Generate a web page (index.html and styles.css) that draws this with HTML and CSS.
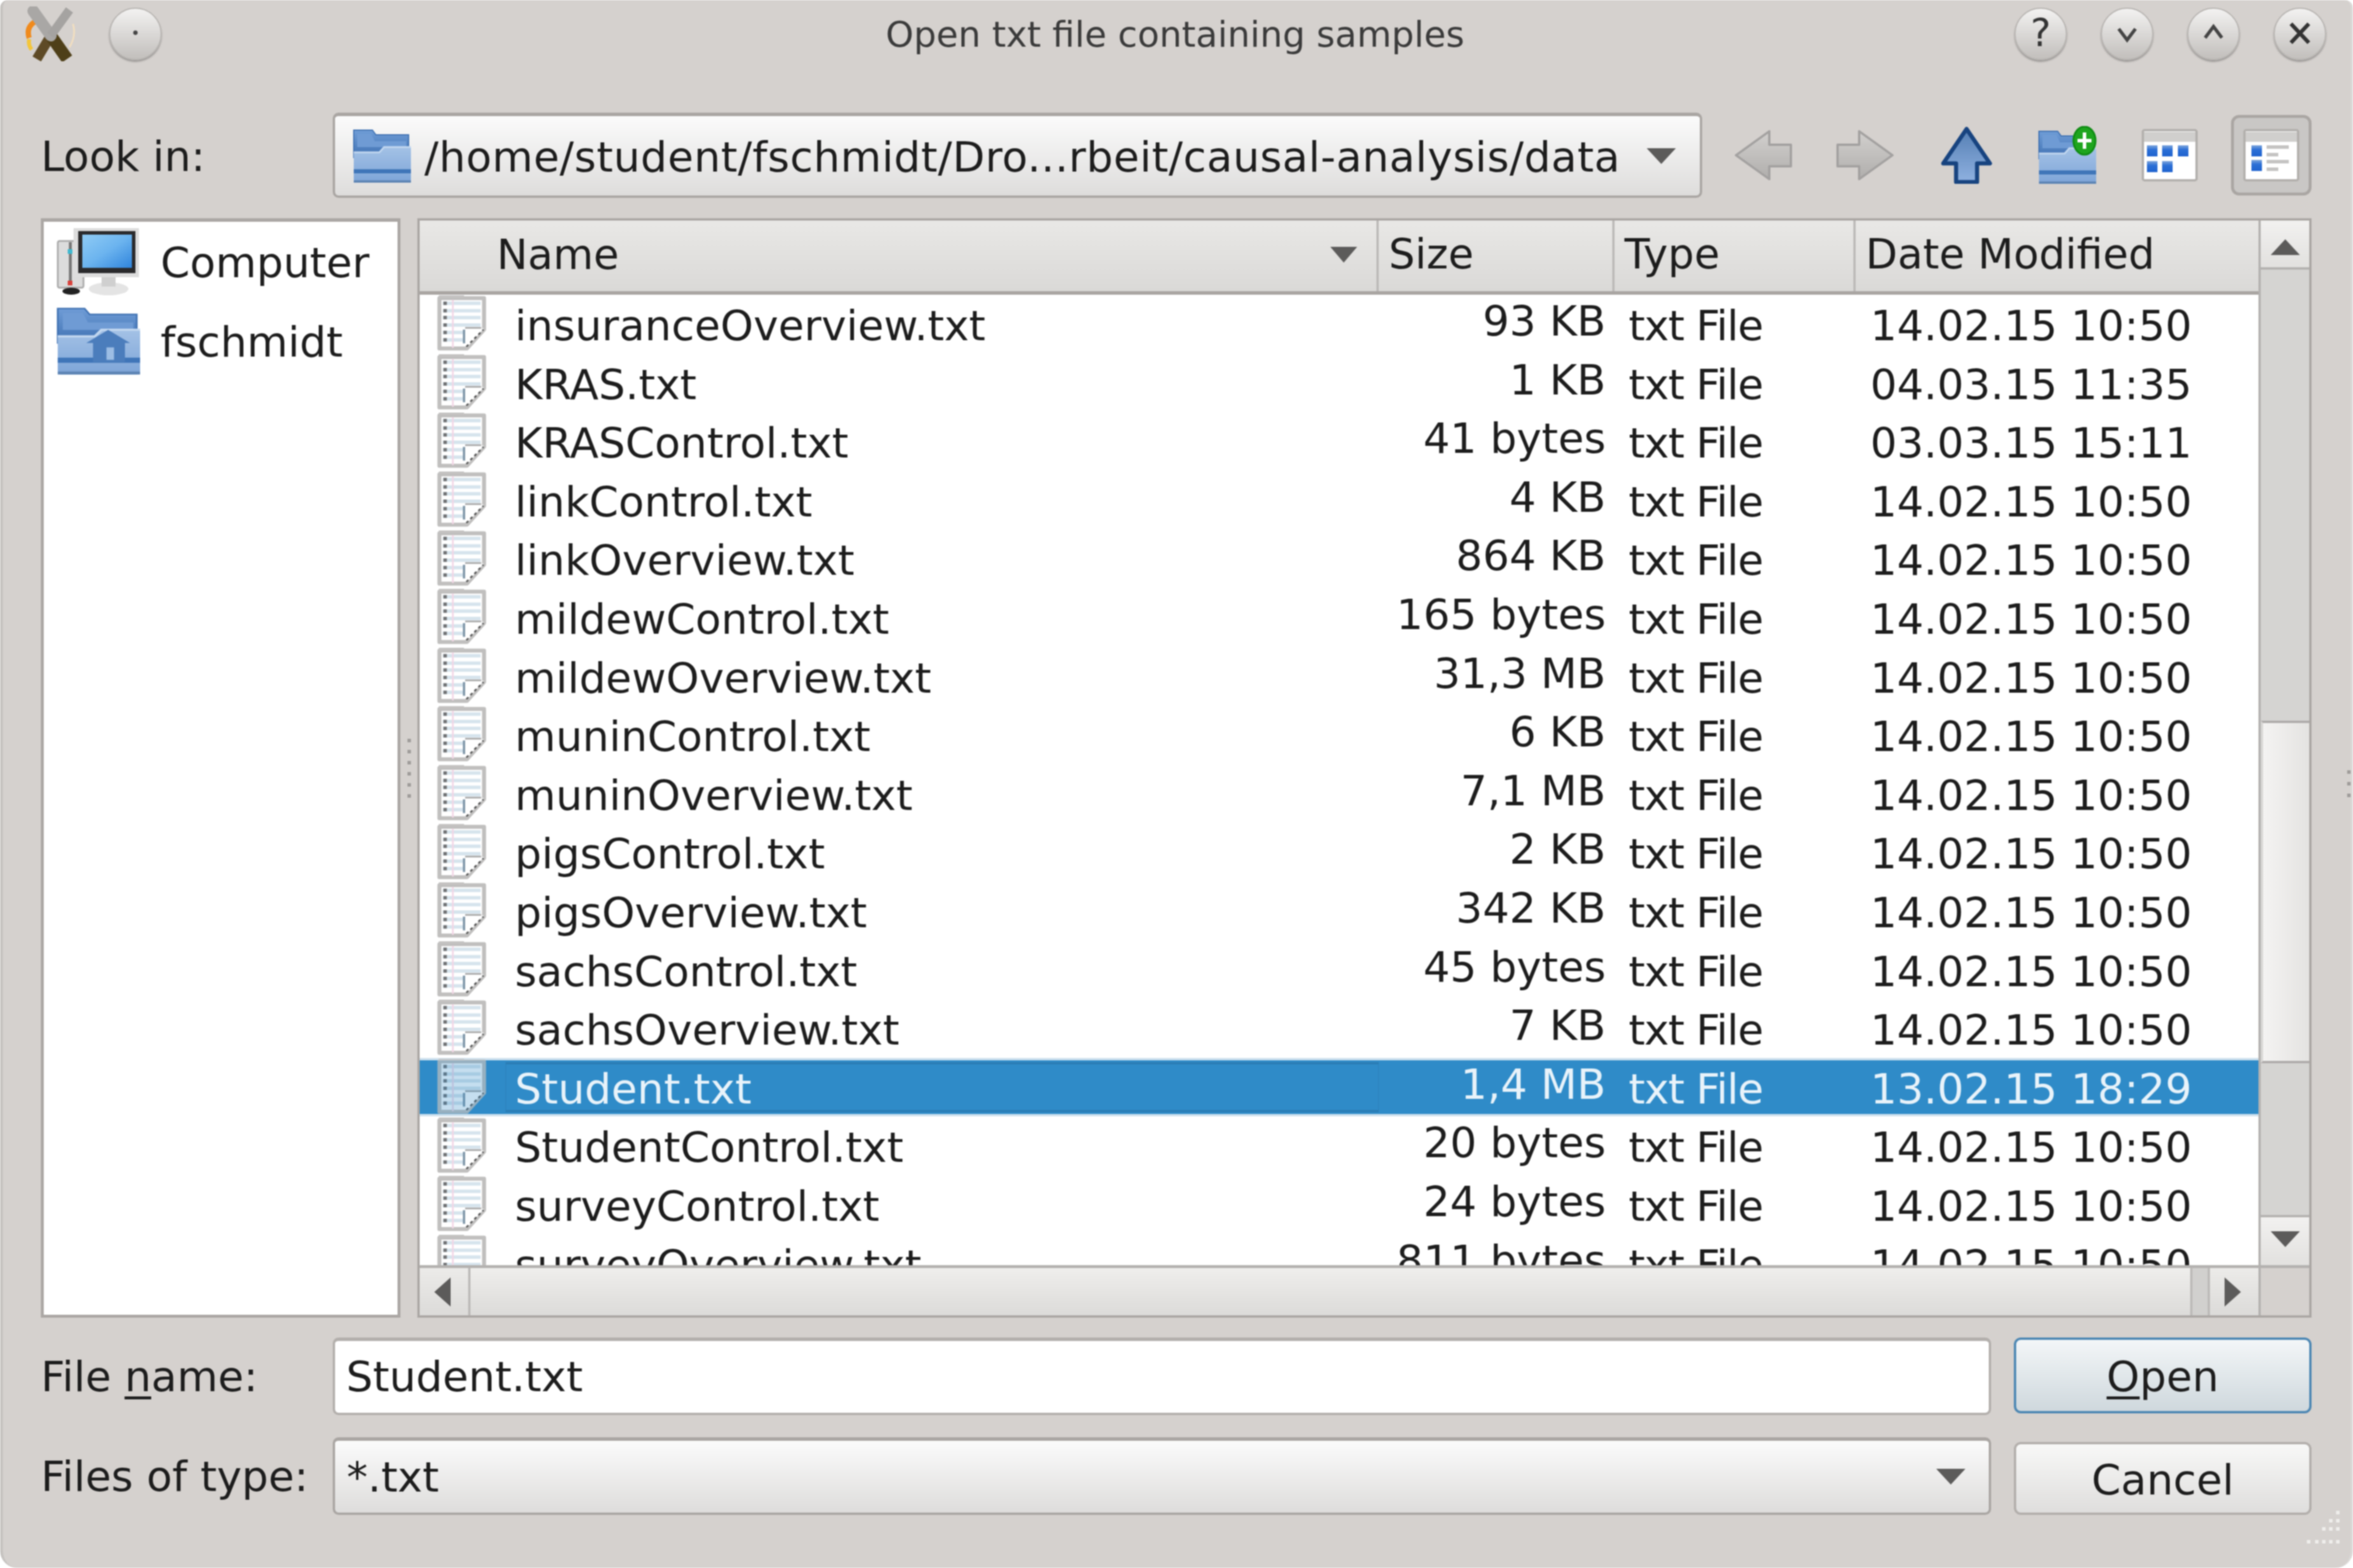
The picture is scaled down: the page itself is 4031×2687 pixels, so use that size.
FILE: index.html
```html
<!DOCTYPE html>
<html lang="en">
<head>
  <meta charset="UTF-8">
  <title>Open txt file containing samples</title>
  <link rel="stylesheet" href="styles.css">
</head>
<body>

  <svg class="defs" width="0" height="0">
    <defs>
      <linearGradient id="gradFront" x1="0" y1="0" x2="0" y2="1">
        <stop offset="0" stop-color="#a4c2e6"/>
        <stop offset="1" stop-color="#7ea5d8"/>
      </linearGradient>
      <linearGradient id="gradBack" x1="0" y1="0" x2="0" y2="1">
        <stop offset="0" stop-color="#6f9cd6"/>
        <stop offset="1" stop-color="#3f71b2"/>
      </linearGradient>
      <linearGradient id="gradGray" x1="0" y1="0" x2="0" y2="1">
        <stop offset="0" stop-color="#d2d0ce"/>
        <stop offset="1" stop-color="#b0aeac"/>
      </linearGradient>
      <linearGradient id="gradUp" x1="0" y1="0" x2="0" y2="1">
        <stop offset="0" stop-color="#557fb4"/>
        <stop offset="1" stop-color="#8fb1e0"/>
      </linearGradient>
      <linearGradient id="gradBlock" x1="0" y1="0" x2="0" y2="1">
        <stop offset="0" stop-color="#7ea6dc"/>
        <stop offset=".4" stop-color="#2c6fd6"/>
        <stop offset="1" stop-color="#1f63cf"/>
      </linearGradient>
      <linearGradient id="gradScreen" x1="0" y1="0" x2="1" y2="1">
        <stop offset="0" stop-color="#8fcbf5"/>
        <stop offset=".5" stop-color="#6cb4ef"/>
        <stop offset="1" stop-color="#2f84dc"/>
      </linearGradient>

      <symbol id="doc" viewBox="0 0 88 100">
        <path d="M5 5H83V60L53 93H5Z" fill="#fff" stroke="#c0bfbe" stroke-width="7" stroke-linejoin="round"/>
        <rect x="4" y="0" width="44" height="4" fill="#c4c3c2"/>
        <g fill="#d6e4ed">
          <rect x="11" y="11" width="66" height="6"/>
          <rect x="11" y="24" width="66" height="6"/>
          <rect x="11" y="36" width="66" height="6"/>
          <rect x="11" y="49" width="66" height="6"/>
          <rect x="11" y="62" width="36" height="6"/>
          <rect x="11" y="75" width="36" height="6"/>
        </g>
        <rect x="27" y="8" width="3" height="84" fill="#f3d6e6"/>
        <g fill="#6f7072">
          <rect x="12" y="11" width="6" height="6"/>
          <rect x="12" y="24" width="6" height="6"/>
          <rect x="12" y="36" width="6" height="6"/>
          <rect x="12" y="49" width="6" height="6"/>
          <rect x="12" y="62" width="6" height="6"/>
          <rect x="12" y="75" width="6" height="6"/>
        </g>
        <rect x="46" y="60" width="4" height="24" fill="#7f96a8"/>
        <path d="M50 58H83L52 92Z" fill="#fff"/>
        <path d="M50 57H78" stroke="#a3a3a3" stroke-width="3"/>
        <path d="M52 90L82 60" stroke="#555" stroke-width="3" stroke-dasharray="5 5"/>
      </symbol>

      <symbol id="folder" viewBox="0 0 100 94">
        <path d="M2 3H34L40 11H96V50H2Z" fill="url(#gradBack)" stroke="#3f71b2" stroke-width="2"/>
        <path d="M8 9H32L38 22H92V32H8Z" fill="#6f9bd4"/>
        <path d="M2 40H46L54 31H100V88Q100 93 95 93H7Q2 93 2 88Z" fill="url(#gradFront)"/>
        <path d="M2 41H46L54 32H100" fill="none" stroke="#c3d8f0" stroke-width="3"/>
        <rect x="2" y="70" width="98" height="7" fill="#3f75b8"/>
        <rect x="2" y="89" width="98" height="4" fill="#5d84b4"/>
      </symbol>

      <symbol id="arrowLeft" viewBox="0 0 98 86">
        <path d="M2 43L59 2V25H96V62H59V84Z" fill="url(#gradGray)" stroke="#a3a1a0" stroke-width="4" stroke-linejoin="round"/>
      </symbol>
      <symbol id="arrowRight" viewBox="0 0 98 86">
        <path d="M96 43L39 2V25H2V62H39V84Z" fill="url(#gradGray)" stroke="#a3a1a0" stroke-width="4" stroke-linejoin="round"/>
      </symbol>
      <symbol id="arrowUp" viewBox="0 0 88 98">
        <path d="M44 4L84 63H62V95H26V63H4Z" fill="url(#gradUp)" stroke="#17437f" stroke-width="7" stroke-linejoin="round"/>
      </symbol>

      <symbol id="viewIcons" viewBox="0 0 96 90">
        <rect x="2" y="2" width="92" height="86" rx="3" fill="#fff" stroke="#b3b0ad" stroke-width="4"/>
        <rect x="4" y="5" width="88" height="17" fill="#d0cfcd"/>
        <g fill="url(#gradBlock)">
          <rect x="9" y="28" width="18" height="19"/>
          <rect x="35" y="28" width="18" height="19"/>
          <rect x="62" y="28" width="18" height="19"/>
          <rect x="9" y="55" width="18" height="19"/>
          <rect x="35" y="55" width="18" height="19"/>
        </g>
      </symbol>
      <symbol id="viewList" viewBox="0 0 96 90">
        <rect x="2" y="2" width="92" height="86" rx="3" fill="#fff" stroke="#b3b0ad" stroke-width="4"/>
        <rect x="4" y="5" width="88" height="17" fill="#d0cfcd"/>
        <g fill="url(#gradBlock)">
          <rect x="14" y="28" width="18" height="19"/>
          <rect x="14" y="53" width="18" height="19"/>
        </g>
        <g fill="#c4c3c2">
          <rect x="40" y="28" width="38" height="6"/>
          <rect x="40" y="41" width="20" height="6"/>
          <rect x="40" y="53" width="38" height="6"/>
          <rect x="40" y="66" width="20" height="6"/>
        </g>
      </symbol>
    </defs>
  </svg>

  <div class="window">

    <div class="titlebar">
      <div class="titleLeft">
        <svg class="appIcon" viewBox="0 0 92 94">
          <path d="M9 54Q3 36 19 26" fill="none" stroke="#f08a1c" stroke-width="9"/>
          <path d="M13 74Q7 66 9 56" fill="none" stroke="#f4c63a" stroke-width="7"/>
          <path d="M84 30Q90 50 78 70" fill="none" stroke="#f3dfc0" stroke-width="3"/>
          <path d="M46 50L22 90" stroke="#5e4a26" stroke-width="17"/>
          <path d="M46 50L74 90" stroke="#4e3f18" stroke-width="21"/>
          <path d="M16 8L46 50" stroke="#a9a7a5" stroke-width="20" stroke-linecap="round"/>
          <path d="M78 6L46 50" stroke="#a5a3a1" stroke-width="15"/>
        </svg>
        <div class="winBtn"><svg viewBox="0 0 90 90"><circle cx="45" cy="43" r="4" fill="#444"/></svg></div>
      </div>
      <div class="title">Open txt file containing samples</div>
      <div class="titleRight">
        <div class="winBtn winBtnText">?</div>
        <div class="winBtn"><svg viewBox="0 0 90 90"><path d="M30 36L45 56L60 36" fill="none" stroke="#444" stroke-width="6"/></svg></div>
        <div class="winBtn"><svg viewBox="0 0 90 90"><path d="M30 52L45 32L60 52" fill="none" stroke="#444" stroke-width="6"/></svg></div>
        <div class="winBtn"><svg viewBox="0 0 90 90"><path d="M29 27L61 61M61 27L29 61" fill="none" stroke="#333" stroke-width="7"/></svg></div>
      </div>
    </div>

    <div class="toolbar">
      <div class="label">Look in:</div>
      <div class="combo comboPath">
        <svg class="pathIcon"><use href="#folder"/></svg>
        <span class="comboText">/home/student/fschmidt/Dro...rbeit/causal-analysis/data</span>
        <span class="triDown"></span>
      </div>
      <div class="tool"><svg class="toolBack"><use href="#arrowLeft"/></svg></div>
      <div class="tool"><svg class="toolBack"><use href="#arrowRight"/></svg></div>
      <div class="tool"><svg class="toolUp"><use href="#arrowUp"/></svg></div>
      <div class="tool">
        <svg class="toolNew" viewBox="0 0 104 100">
          <use href="#folder" x="0" y="6" width="100" height="94"/>
          <ellipse cx="80" cy="25" rx="19" ry="24" fill="#1ea51e" stroke="#0e8a12" stroke-width="3"/>
          <path d="M80 11V39M68 25H92" stroke="#fff" stroke-width="6"/>
        </svg>
      </div>
      <div class="tool"><svg class="toolView"><use href="#viewIcons"/></svg></div>
      <div class="tool toolActive"><svg class="toolView"><use href="#viewList"/></svg></div>
    </div>

    <div class="panes">
      <div class="sidebar">
        <div class="place">
          <svg class="placeIcon" viewBox="0 0 144 118">
            <rect x="3" y="24" width="44" height="80" rx="3" fill="#dcdcdc" stroke="#aaa" stroke-width="3"/>
            <rect x="22" y="26" width="5" height="74" fill="#777"/>
            <rect x="20" y="38" width="8" height="8" fill="#3db8d0"/>
            <rect x="20" y="92" width="8" height="8" fill="#d8403a"/>
            <ellipse cx="26" cy="110" rx="15" ry="6" fill="#222"/>
            <ellipse cx="90" cy="106" rx="34" ry="11" fill="#e4e4e4"/>
            <rect x="78" y="84" width="24" height="18" fill="#cfcfcf"/>
            <rect x="30" y="2" width="112" height="84" fill="#ddd"/>
            <rect x="38" y="7" width="98" height="72" fill="#2a2a2c"/>
            <rect x="45" y="13" width="85" height="57" fill="url(#gradScreen)"/>
          </svg>
          <span>Computer</span>
        </div>
        <div class="place">
          <svg class="placeIcon" viewBox="0 0 100 94" preserveAspectRatio="none">
            <use href="#folder" width="100" height="94"/>
            <path d="M62 32L88 50H82V76H44V50H36Z" fill="#4b7dbc"/>
            <rect x="60" y="56" width="9" height="17" fill="#9cbde4"/>
          </svg>
          <span>fschmidt</span>
        </div>
      </div>

      <div class="splitter">
        <i></i><i></i><i></i><i></i><i></i><i></i>
      </div>

      <div class="list">
        <div class="view">
          <div class="cols header">
            <div class="headName"><span>Name</span> <span class="triDown triSort"></span></div>
            <div>Size</div>
            <div>Type</div>
            <div>Date Modified</div>
          </div>
          <div class="rows">
            <div class="cols row"><div class="name"><svg class="doc"><use href="#doc"/></svg>insuranceOverview.txt</div><div class="size">93 KB</div><div class="type">txt File</div><div class="date">14.02.15 10:50</div></div>
            <div class="cols row"><div class="name"><svg class="doc"><use href="#doc"/></svg>KRAS.txt</div><div class="size">1 KB</div><div class="type">txt File</div><div class="date">04.03.15 11:35</div></div>
            <div class="cols row"><div class="name"><svg class="doc"><use href="#doc"/></svg>KRASControl.txt</div><div class="size">41 bytes</div><div class="type">txt File</div><div class="date">03.03.15 15:11</div></div>
            <div class="cols row"><div class="name"><svg class="doc"><use href="#doc"/></svg>linkControl.txt</div><div class="size">4 KB</div><div class="type">txt File</div><div class="date">14.02.15 10:50</div></div>
            <div class="cols row"><div class="name"><svg class="doc"><use href="#doc"/></svg>linkOverview.txt</div><div class="size">864 KB</div><div class="type">txt File</div><div class="date">14.02.15 10:50</div></div>
            <div class="cols row"><div class="name"><svg class="doc"><use href="#doc"/></svg>mildewControl.txt</div><div class="size">165 bytes</div><div class="type">txt File</div><div class="date">14.02.15 10:50</div></div>
            <div class="cols row"><div class="name"><svg class="doc"><use href="#doc"/></svg>mildewOverview.txt</div><div class="size">31,3 MB</div><div class="type">txt File</div><div class="date">14.02.15 10:50</div></div>
            <div class="cols row"><div class="name"><svg class="doc"><use href="#doc"/></svg>muninControl.txt</div><div class="size">6 KB</div><div class="type">txt File</div><div class="date">14.02.15 10:50</div></div>
            <div class="cols row"><div class="name"><svg class="doc"><use href="#doc"/></svg>muninOverview.txt</div><div class="size">7,1 MB</div><div class="type">txt File</div><div class="date">14.02.15 10:50</div></div>
            <div class="cols row"><div class="name"><svg class="doc"><use href="#doc"/></svg>pigsControl.txt</div><div class="size">2 KB</div><div class="type">txt File</div><div class="date">14.02.15 10:50</div></div>
            <div class="cols row"><div class="name"><svg class="doc"><use href="#doc"/></svg>pigsOverview.txt</div><div class="size">342 KB</div><div class="type">txt File</div><div class="date">14.02.15 10:50</div></div>
            <div class="cols row"><div class="name"><svg class="doc"><use href="#doc"/></svg>sachsControl.txt</div><div class="size">45 bytes</div><div class="type">txt File</div><div class="date">14.02.15 10:50</div></div>
            <div class="cols row"><div class="name"><svg class="doc"><use href="#doc"/></svg>sachsOverview.txt</div><div class="size">7 KB</div><div class="type">txt File</div><div class="date">14.02.15 10:50</div></div>
            <div class="cols row selected"><div class="name"><svg class="doc"><use href="#doc"/></svg><span class="nameBox">Student.txt</span></div><div class="size">1,4 MB</div><div class="type">txt File</div><div class="date">13.02.15 18:29</div></div>
            <div class="cols row"><div class="name"><svg class="doc"><use href="#doc"/></svg>StudentControl.txt</div><div class="size">20 bytes</div><div class="type">txt File</div><div class="date">14.02.15 10:50</div></div>
            <div class="cols row"><div class="name"><svg class="doc"><use href="#doc"/></svg>surveyControl.txt</div><div class="size">24 bytes</div><div class="type">txt File</div><div class="date">14.02.15 10:50</div></div>
            <div class="cols row"><div class="name"><svg class="doc"><use href="#doc"/></svg>surveyOverview.txt</div><div class="size">811 bytes</div><div class="type">txt File</div><div class="date">14.02.15 10:50</div></div>
          </div>
        </div>

        <div class="vscroll">
          <div class="scrollBtn"><span class="triUp"></span></div>
          <div class="vtrack"><div class="vslider"></div></div>
          <div class="scrollBtn scrollBtnDown"><span class="triDown"></span></div>
        </div>

        <div class="hscroll">
          <div class="hbtn"><span class="triLeft"></span></div>
          <div class="hslider"></div>
          <div class="hgroove"></div>
          <div class="hbtn hbtnRight"><span class="triRight"></span></div>
        </div>
        <div class="corner"></div>
      </div>
    </div>

    <div class="form">
      <div class="label">File <u>n</u>ame:</div>
      <div class="input">Student.txt</div>
      <div class="button buttonDefault"><span><u>O</u>pen</span></div>
      <div class="label">Files of type:</div>
      <div class="combo comboType">
        <span class="comboText">*.txt</span>
        <span class="triDown"></span>
      </div>
      <div class="button buttonCancel">Cancel</div>
    </div>

    <svg class="grip" viewBox="0 0 68 66">
      <g fill="#efeeec">
        <rect x="56" y="4" width="6" height="6"/>
        <rect x="44" y="18" width="6" height="6"/><rect x="56" y="18" width="6" height="6"/>
        <rect x="32" y="32" width="6" height="6"/><rect x="44" y="32" width="6" height="6"/><rect x="56" y="32" width="6" height="6"/>
        <rect x="6" y="54" width="6" height="6"/><rect x="20" y="54" width="6" height="6"/><rect x="32" y="54" width="6" height="6"/><rect x="44" y="54" width="6" height="6"/><rect x="56" y="54" width="6" height="6"/>
      </g>
    </svg>

    <div class="sideDots"><i></i><i></i><i></i></div>
  </div>

</body>
</html>
```

FILE: styles.css
```css
html, body {
  margin: 0;
  padding: 0;
  background-color: #fff;
}

.defs {
  position: absolute;
}

.window {
  position: relative;
  box-sizing: border-box;
  width: 4031px;
  height: 2687px;
  padding: 0 67px 0 65px;
  background-color: #d5d1ce;
  border-left: 5px solid #c6c3c0;
  border-right: 4px solid #dcdad8;
  border-radius: 14px 14px 30px 30px;
  font-family: "DejaVu Sans", sans-serif;
  font-size: 72px;
  color: #1c1c1c;
  filter: blur(1.2px);
  overflow: hidden;
}

/* title bar */
.titlebar {
  display: grid;
  grid-template-columns: 1fr auto 1fr;
  align-items: center;
  height: 116px;
  margin: 0 -25px 0 -29px;
}

.titleLeft {
  display: flex;
  align-items: center;
  gap: 54px;
}

.appIcon {
  width: 92px;
  height: 94px;
}

.title {
  font-size: 61px;
  color: #3a3a3a;
}

.titleRight {
  display: flex;
  justify-content: flex-end;
  gap: 58px;
}

.winBtn {
  box-sizing: border-box;
  width: 90px;
  height: 90px;
  border-radius: 50%;
  background: linear-gradient(#f3f2f1, #c2bfbc);
  box-shadow: 0 3px 3px #9a9795;
  border: 2px solid #b8b5b2;
}

.winBtn svg {
  display: block;
  width: 100%;
  height: 100%;
}

.winBtnText {
  text-align: center;
  line-height: 84px;
  font-size: 66px;
  color: #333;
}

/* look in row */
.toolbar {
  display: flex;
  align-items: center;
  gap: 36px;
  height: 146px;
  margin-top: 77px;
}

.label {
  white-space: nowrap;
}

.toolbar .label {
  flex: none;
  width: 464px;
  padding-top: 3px;
}

.combo {
  box-sizing: border-box;
  display: flex;
  align-items: center;
  background: linear-gradient(#fbfbfb, #dedddc);
  border: 4px solid #aaa6a3;
  border-top-width: 6px;
  border-radius: 10px;
}

.comboPath {
  flex: none;
  width: 2346px;
  height: 146px;
  padding: 0 41px 0 30px;
}

.pathIcon {
  flex: none;
  width: 100px;
  height: 94px;
  margin-right: 23px;
}

.comboText {
  flex: 1;
  white-space: nowrap;
}

.comboPath .comboText {
  padding-top: 3px;
  letter-spacing: .7px;
}

.triDown {
  flex: none;
  width: 0;
  height: 0;
  border-left: 25px solid transparent;
  border-right: 25px solid transparent;
  border-top: 27px solid #5c5b5a;
}

.triUp {
  width: 0;
  height: 0;
  border-left: 25px solid transparent;
  border-right: 25px solid transparent;
  border-bottom: 27px solid #5c5b5a;
}

.triLeft {
  width: 0;
  height: 0;
  border-top: 25px solid transparent;
  border-bottom: 25px solid transparent;
  border-right: 28px solid #5c5b5a;
}

.triRight {
  width: 0;
  height: 0;
  border-top: 25px solid transparent;
  border-bottom: 25px solid transparent;
  border-left: 28px solid #5c5b5a;
}

.tool {
  flex: none;
  box-sizing: border-box;
  display: flex;
  align-items: center;
  justify-content: center;
  width: 138px;
  height: 138px;
}

.toolActive {
  background-color: #c9c7c5;
  border: 5px solid #aaa6a3;
  border-radius: 14px;
}

.toolBack {
  width: 98px;
  height: 86px;
}

.toolUp {
  width: 88px;
  height: 98px;
}

.toolNew {
  width: 104px;
  height: 100px;
}

.toolView {
  width: 96px;
  height: 90px;
}

/* panes */
.panes {
  display: flex;
  height: 1884px;
  margin-top: 35px;
}

.sidebar {
  box-sizing: border-box;
  flex: none;
  width: 616px;
  padding: 0 0 0 21px;
  background-color: #fff;
  border: 5px solid #aba7a4;
  border-top-width: 6px;
}

.place {
  display: flex;
  align-items: center;
  gap: 35px;
  height: 136px;
}

.place span {
  padding-top: 4px;
}

.placeIcon {
  flex: none;
  width: 144px;
  height: 118px;
}

.splitter {
  flex: none;
  display: flex;
  flex-direction: column;
  align-items: center;
  justify-content: center;
  gap: 13px;
  width: 29px;
}

.splitter i {
  width: 6px;
  height: 6px;
  background-color: #9f9c9a;
}

.list {
  box-sizing: border-box;
  flex: 1;
  display: grid;
  grid-template-columns: 3150px 1fr;
  grid-template-rows: 1fr 86px;
  border: 4px solid #aba7a4;
  background-color: #d5d4d2;
  min-height: 0;
}

.view {
  display: flex;
  flex-direction: column;
  min-height: 0;
  background-color: #fff;
}

.cols {
  display: grid;
  grid-template-columns: 1643px 404px 413px 1fr;
}

.header {
  box-sizing: border-box;
  flex: none;
  height: 127px;
  line-height: 116px;
  font-size: 71px;
  background: linear-gradient(#e9e8e6, #dad9d7);
  border-bottom: 6px solid #a9a5a2;
}

.header > div {
  box-sizing: border-box;
  padding-left: 17px;
  border-right: 4px solid #bcbab8;
}

.header > div:last-child {
  border-right: none;
}

.header .headName {
  display: flex;
  align-items: center;
  justify-content: space-between;
  padding: 0 33px 4px 132px;
}

.triSort {
  border-left-width: 23px;
  border-right-width: 23px;
}

.rows {
  flex: 1;
  overflow: hidden;
  min-height: 0;
}

.row {
  box-sizing: border-box;
  height: 100.6px;
  padding-top: 6px;
  line-height: 94.6px;
  white-space: nowrap;
}

.name {
  display: flex;
  align-items: center;
  padding-left: 28px;
}

.doc {
  flex: none;
  width: 88px;
  height: 98px;
  margin: -6px 47px 0 0;
}

.size {
  padding-right: 15px;
  text-align: right;
  line-height: 78px;
}

.type {
  padding-left: 24px;
  letter-spacing: -1.6px;
}

.date {
  padding-left: 25px;
}

.selected {
  background-color: #2f8bc8;
  color: #e9f3fa;
  box-shadow: inset 0 4px 0 #cfe1ee, inset 0 -4px 0 #cfe1ee;
}

.selected .doc {
  opacity: .72;
}

.nameBox {
  box-sizing: border-box;
  flex: 1;
  height: 86px;
  margin: -6px 0 0 -16px;
  padding-left: 15px;
  line-height: 84px;
  border: 1px solid #2c7fb8;
  border-top: 4px solid #2b7db5;
  border-bottom: 4px solid #2b7db5;
}

/* scrollbars */
.vscroll {
  grid-column: 2;
  grid-row: 1;
  display: flex;
  flex-direction: column;
  border-left: 4px solid #b4b2b0;
  min-height: 0;
}

.scrollBtn {
  box-sizing: border-box;
  flex: none;
  display: flex;
  justify-content: center;
  padding-top: 32px;
  height: 84px;
  background: linear-gradient(#f2f1f0, #e2e1df);
  border-bottom: 4px solid #b4b2b0;
}

.scrollBtnDown {
  height: 86px;
  padding-top: 24px;
  border-top: 4px solid #b4b2b0;
  border-bottom: none;
}

.vtrack {
  flex: 1;
  padding-top: 773px;
}

.vslider {
  box-sizing: border-box;
  height: 587px;
  background: linear-gradient(to right, #f4f3f2, #e4e3e1);
  border-top: 4px solid #aeabaa;
  border-bottom: 4px solid #aeabaa;
  border-left: 4px solid #d9d8d6;
}

.hscroll {
  grid-column: 1;
  grid-row: 2;
  display: flex;
  border-top: 5px solid #b4b2b0;
}

.hbtn {
  box-sizing: border-box;
  flex: none;
  display: flex;
  align-items: center;
  justify-content: center;
  width: 87px;
  padding-right: 6px;
  background: linear-gradient(#ecebe9, #dcdbd9);
  border-right: 4px solid #bcbab8;
}

.hbtnRight {
  border-right: none;
  border-left: 4px solid #bcbab8;
}

.hslider {
  flex: 1;
  background: linear-gradient(#efeeec, #dcdbd9);
}

.hgroove {
  flex: none;
  width: 26px;
  background-color: #d1d0ce;
  border-left: 4px solid #bcbab8;
}

.corner {
  grid-column: 2;
  grid-row: 2;
  background-color: #d5d1ce;
  border-top: 5px solid #b4b2b0;
  border-left: 4px solid #b4b2b0;
}

/* file name and type rows */
.form {
  display: grid;
  grid-template-columns: 500px 2841px 549px;
  grid-template-rows: 133px 133px;
  row-gap: 38px;
  align-items: center;
  margin-top: 34px;
}

.input {
  box-sizing: border-box;
  height: 133px;
  padding-left: 19px;
  line-height: 122px;
  background-color: #fff;
  border: 4px solid #b3afac;
  border-top-width: 6px;
  border-radius: 10px;
}

.comboType {
  height: 133px;
  padding: 0 40px 0 20px;
}

.button {
  box-sizing: border-box;
  margin-left: 39px;
  text-align: center;
  border-radius: 12px;
}

.buttonDefault {
  height: 130px;
  line-height: 126px;
  background: linear-gradient(#f3f6f8, #cfd8dd);
  border: 4px solid #4d87b3;
  align-self: start;
}

.buttonCancel {
  height: 125px;
  line-height: 122px;
  background: linear-gradient(#f8f8f7, #dfdedd);
  border: 4px solid #b3afac;
  align-self: end;
}

u {
  text-decoration-thickness: 5px;
  text-underline-offset: 9px;
}

.grip {
  position: absolute;
  left: 3941px;
  top: 2585px;
  width: 68px;
  height: 66px;
}

.sideDots {
  position: absolute;
  right: 0;
  top: 1320px;
  display: flex;
  flex-direction: column;
  gap: 14px;
}

.sideDots i {
  display: block;
  width: 6px;
  height: 6px;
  background-color: #9f9c9a;
}
```
